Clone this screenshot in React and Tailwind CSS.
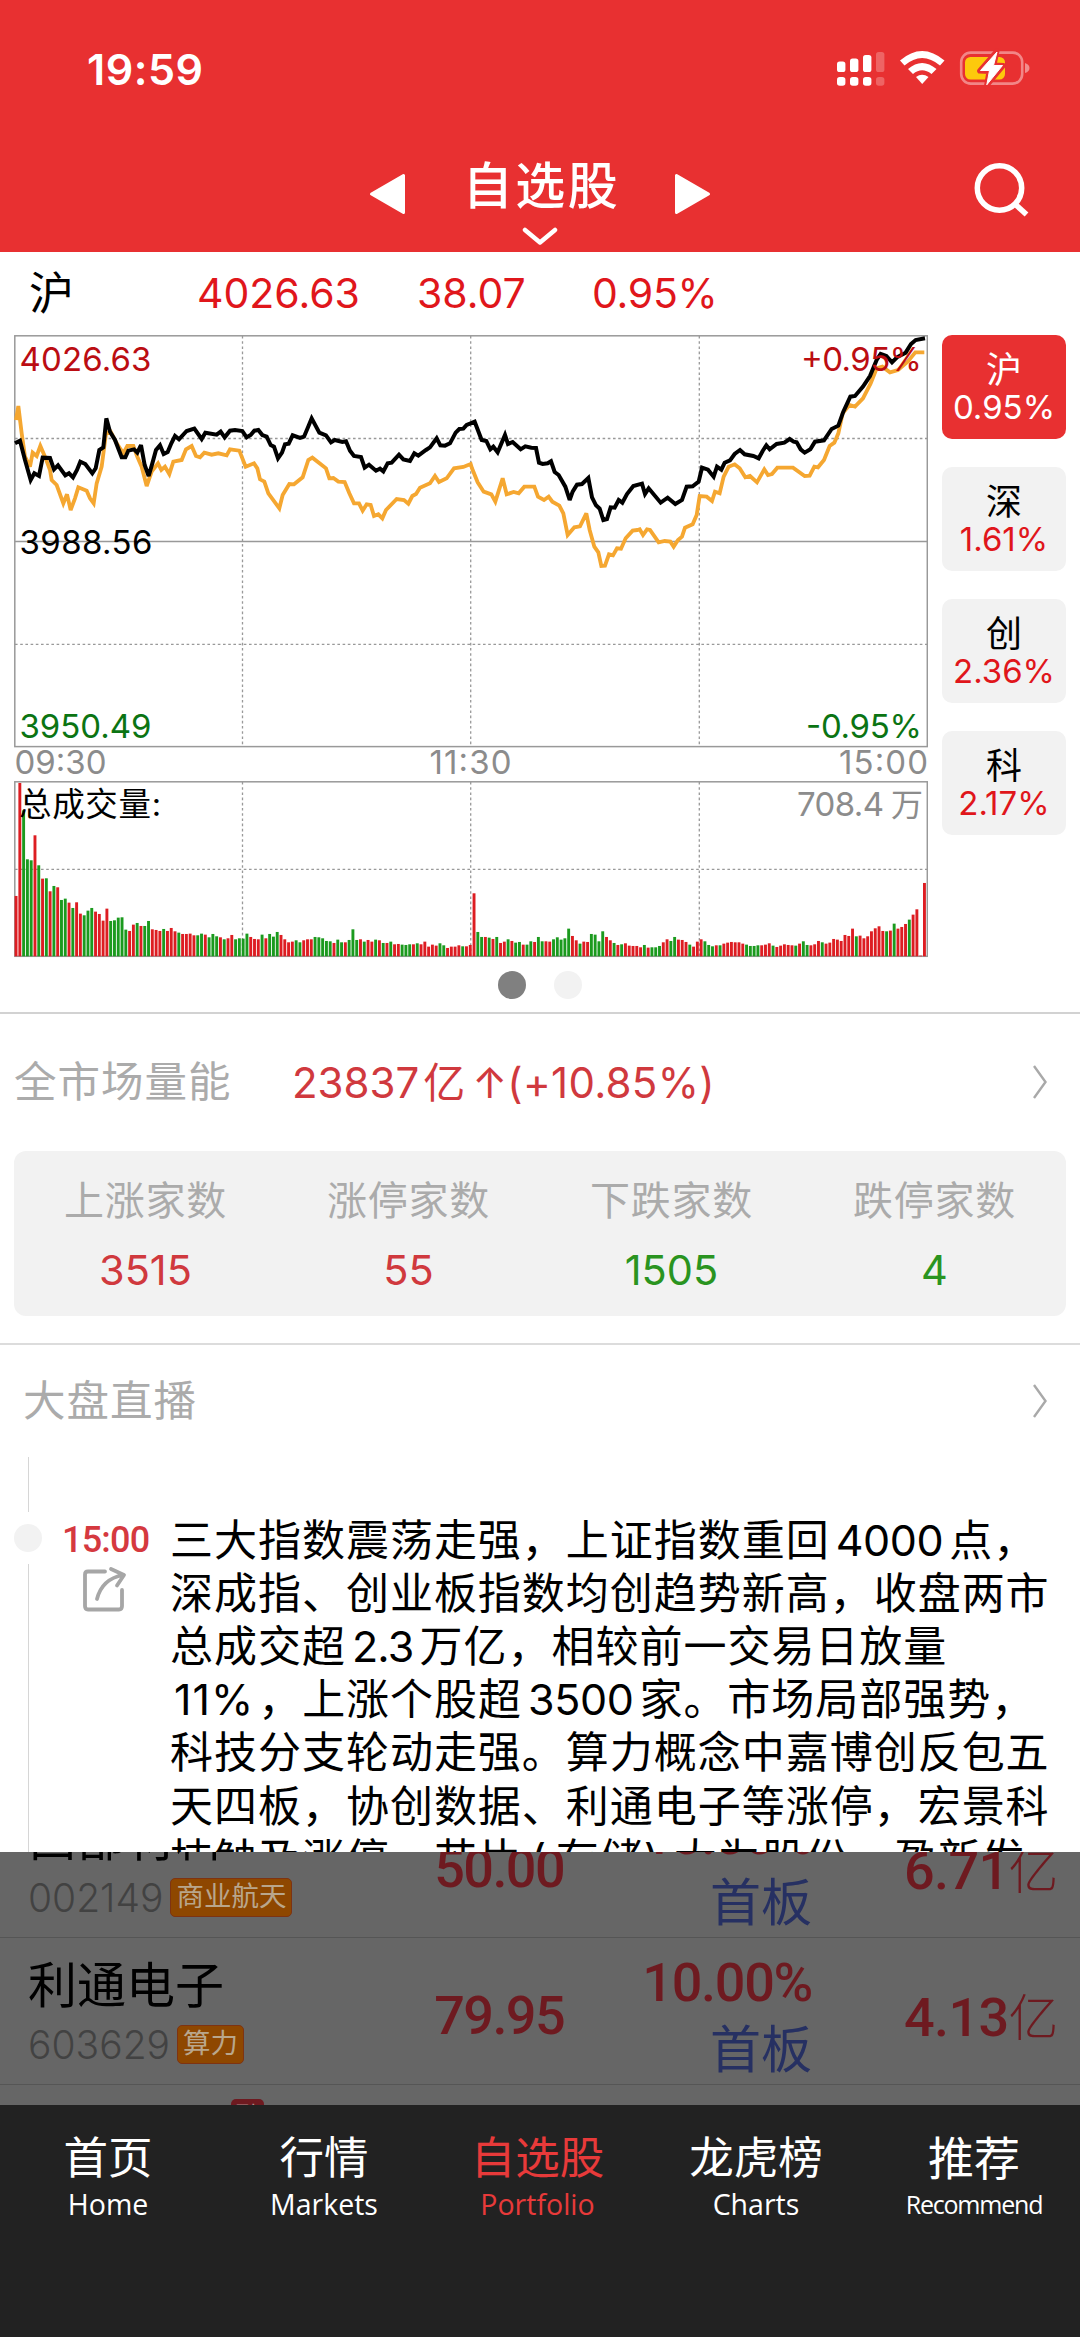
import React, { useState } from 'react';

const PRICE = '45,370 60,362 75,420 92,480 103,460 117,468 128,413 150,414 162,448 174,436 196,466 207,460 219,472 231,450 241,425 256,432 277,460 287,445 298,390 310,382 319,295 330,335 345,360 365,412 376,412 385,392 402,388 412,398 423,375 434,435 446,468 457,430 468,390 480,376 491,402 503,396 514,370 525,348 537,358 560,333 583,326 605,357 616,338 650,344 662,335 674,352 690,332 705,330 727,333 740,352 752,345 763,332 775,330 787,345 800,350 812,375 822,380 834,415 846,398 855,373 866,371 878,346 900,354 912,350 924,322 935,295 958,338 978,346 993,367 1004,360 1027,366 1038,364 1050,392 1062,408 1083,411 1094,443 1107,434 1128,452 1140,446 1150,454 1163,430 1175,428 1197,404 1210,418 1230,423 1243,400 1255,407 1278,390 1290,382 1310,355 1321,376 1335,377 1350,370 1367,338 1378,327 1390,326 1400,315 1412,310 1424,305 1445,360 1459,363 1471,388 1480,380 1493,397 1515,345 1524,372 1538,366 1562,388 1576,379 1594,383 1608,384 1617,428 1628,432 1643,430 1653,424 1664,456 1676,465 1696,500 1709,540 1718,515 1731,494 1746,492 1765,474 1776,532 1788,556 1799,566 1810,600 1821,597 1832,562 1844,563 1856,540 1867,548 1881,522 1900,498 1926,491 1935,522 1946,505 1982,548 2003,533 2026,552 2046,540 2060,500 2078,499 2096,485 2106,443 2124,449 2141,470 2151,440 2164,449 2174,428 2190,421 2204,402 2220,390 2234,403 2260,408 2276,415 2288,393 2299,376 2309,388 2330,372 2353,368 2369,357 2381,365 2390,367 2402,388 2414,398 2431,388 2445,365 2472,361 2495,327 2515,317 2530,275 2551,230 2565,228 2589,200 2610,168 2630,120 2642,102 2659,108 2676,127 2691,112 2717,98 2733,72 2747,60 2775,55';

const AVERAGE = '48,300 55,258 65,340 75,410 90,440 98,398 110,408 121,378 135,410 150,450 155,480 170,495 190,550 201,523 212,570 225,535 235,502 260,512 270,535 281,550 290,490 305,440 318,340 332,335 350,370 370,400 382,378 400,378 412,410 425,440 440,498 455,455 474,430 484,450 495,440 508,462 520,425 545,420 558,388 575,378 588,408 600,412 613,398 635,404 655,400 680,406 690,388 718,392 737,440 762,430 772,445 780,478 793,485 805,520 838,565 848,525 868,492 882,493 908,472 925,420 937,413 978,445 988,475 1000,474 1015,485 1034,486 1048,520 1062,550 1077,550 1088,572 1100,553 1112,555 1122,588 1135,583 1147,595 1158,570 1190,537 1212,540 1225,551 1237,528 1248,522 1260,503 1290,490 1305,468 1317,486 1340,475 1362,445 1390,441 1412,432 1416,445 1433,487 1451,515 1474,523 1486,545 1508,475 1520,523 1541,516 1556,520 1573,500 1603,500 1614,530 1632,540 1646,530 1657,545 1678,557 1690,580 1703,645 1723,622 1740,619 1759,580 1769,630 1783,680 1795,697 1804,738 1815,737 1827,703 1839,706 1851,685 1863,686 1877,655 1898,632 1912,630 1919,628 1929,645 1941,628 1950,630 1976,667 1994,663 2011,665 2021,680 2034,660 2046,650 2055,623 2078,613 2090,585 2099,528 2120,530 2136,543 2145,515 2159,520 2171,470 2186,440 2204,433 2219,445 2236,472 2250,468 2271,487 2293,448 2304,465 2316,462 2332,443 2379,443 2414,468 2429,467 2443,440 2454,442 2472,420 2489,378 2503,368 2515,340 2528,280 2548,255 2565,260 2589,235 2612,190 2630,145 2647,140 2670,157 2694,150 2723,125 2746,97 2773,97';

// negative = falling minute
const VOLUME = [
    181, 520, -438, -291, -288, 363, -273, 233, -234, 195, -211, 207, -169, -173, 161, -145, 162, 128, -123, -137,
    -145, 134, 127, 107, 143, -106, -108, -116, -117, -80, 76, 95, -100, 91, -91, -106, 81, 79, 76, -82,
    76, 85, 75, -71, 67, 67, 68, 63, -63, -68, 65, -57, -67, -60, 57, -51, 54, 64, -51, -54,
    -53, -68, 58, 52, 51, -65, 54, -67, -59, -73, 64, 51, 42, 44, -48, -42, 48, 51, 51, -58,
    -57, -54, -46, -45, 40, -50, -42, 42, -49, -81, -49, 51, -44, 49, 44, -50, 48, -40, 40, -44,
    36, 37, -35, -34, -36, 36, -39, 36, 44, 29, 35, 32, -39, -33, 25, 29, 29, 33, -30, 30,
    34, 189, -73, -58, 58, -56, 52, -58, 40, 44, -51, 46, -41, -43, 35, -35, -45, 43, -58, -45,
    45, 44, -51, -57, -50, -54, -83, 61, 48, -38, 44, 43, -67, -65, -45, -75, 58, 48, -40, 34,
    -36, 39, 32, 31, 31, 27, -34, 26, -27, -27, -31, 42, 51, -46, -58, 50, 49, 43, -35, 29,
    44, 51, -45, -34, -30, 33, -33, 38, 41, 43, 42, 42, 38, -35, -31, -31, -33, 33, 35, 39,
    -32, 28, 32, 36, 34, 33, -32, 38, -45, -34, 33, 36, 46, -42, 38, 41, 52, 50, 46, 64,
    61, 83, -60, 62, 54, 60, 75, 84, 90, 76, -75, 77, -98, 83, 88, 97, -110, 125, 141, 2, 220,
];

const INDEXES = [
    { name: '沪', change: '0.95%' },
    { name: '深', change: '1.61%' },
    { name: '创', change: '2.36%' },
    { name: '科', change: '2.17%' },
];

const STATS = [
    { label: '上涨家数', value: '3515', color: 'text-[#d0393e]' },
    { label: '涨停家数', value: '55', color: 'text-[#d0393e]' },
    { label: '下跌家数', value: '1505', color: 'text-[#2a9420]' },
    { label: '跌停家数', value: '4', color: 'text-[#2a9420]' },
];

const STOCKS = [
    { name: '西部材料', code: '002149', tag: '商业航天', price: '50.00', percent: '10.00%', amount: '6.71' },
    { name: '利通电子', code: '603629', tag: '算力', price: '79.95', percent: '10.00%', amount: '4.13' },
];

const TABS = [
    { cn: '首页', en: 'Home' },
    { cn: '行情', en: 'Markets' },
    { cn: '自选股', en: 'Portfolio' },
    { cn: '龙虎榜', en: 'Charts' },
    { cn: '推荐', en: 'Recommend', small: true },
];

const StatusIcons = () => (
    <svg width="200" height="44" viewBox="832 46 200 44" fill="#fff">
        <rect x="837" y="61.5" width="8.4" height="10.5" rx="2.6" />
        <rect x="850" y="58.5" width="8.4" height="13.5" rx="2.6" />
        <rect x="863" y="55" width="8.4" height="17" rx="2.6" />
        <rect x="876" y="52" width="8.4" height="20" rx="2.6" opacity="0.25" />
        <rect x="837" y="77" width="8.4" height="8.8" rx="2.8" />
        <rect x="850" y="77" width="8.4" height="8.8" rx="2.8" />
        <rect x="863" y="77" width="8.4" height="8.8" rx="2.8" />
        <rect x="876" y="77" width="8.4" height="8.8" rx="2.8" opacity="0.25" />
        <path d="M900 60.5 Q922 41.500 944.500 60.500 L940 65.500 Q922 50.500 904.500 65.500 Z" />
        <path d="M908 69 Q922 57 936.500 69 L931.500 74 Q922 66.500 913 74 Z" />
        <path d="M916 77 Q922 72.500 928.500 77 L922.200 84 Z" />
        <rect x="961.200" y="52.600" width="61" height="31" rx="9.500" fill="none" stroke="#fff" strokeOpacity="0.42" strokeWidth="2.600" />
        <path d="M1025 63 Q1029.500 64.500 1029.500 68 Q1029.500 71.500 1025 73 Z" opacity="0.45" />
        <rect x="965" y="57" width="40" height="22.500" rx="5.500" fill="#fdc90c" />
        <path d="M997 51 L979.500 71 L989 71.500 L986.500 86 L1003.500 65.500 L994 65 Z" stroke="#e83031" strokeWidth="5" strokeLinejoin="round" />
        <path d="M997 52 L980.500 70.500 L989.500 70.500 L986.800 84.800 L1002.500 65.500 L993.500 65.500 Z" stroke="#fff" strokeWidth="1" strokeLinejoin="round" />
    </svg>
);

const Header = () => (
    <header className="h-[252px] bg-[#e83031] text-white">
        <div className="flex h-[136px] items-center justify-between pl-[87px] pr-[48px]">
            <span className="pt-[2px] text-[43px] font-semibold leading-none tracking-[0.500px]">19:59</span>
            <StatusIcons />
        </div>
        <div className="flex items-start pl-[369px] pr-[50px]">
            <svg className="mt-[37px]" width="37" height="42" viewBox="0 0 37 42" fill="#fff" stroke="#fff" strokeWidth="3" strokeLinejoin="round">
                <path d="M34.500 2.500 V39.500 L2.500 21 Z" />
            </svg>
            <div className="flex w-[268px] flex-col items-center">
                <h1 className="mt-[20px] h-[60px] pl-[3px] text-[50px] font-medium leading-[60px] tracking-[2.500px]">自选股</h1>
                <svg className="mt-[10px]" width="36" height="20" viewBox="0 0 36 20" fill="none" stroke="#fff" strokeWidth="4.500" strokeLinecap="round" strokeLinejoin="round">
                    <path d="M3 4 L18 16.500 L33 4" />
                </svg>
            </div>
            <svg className="mt-[37px]" width="37" height="42" viewBox="0 0 37 42" fill="#fff" stroke="#fff" strokeWidth="3" strokeLinejoin="round">
                <path d="M2.500 2.500 V39.500 L34.500 21 Z" />
            </svg>
            <svg className="ml-auto mt-[25px]" width="60" height="60" viewBox="970 161 60 60" fill="none" stroke="#fff" strokeWidth="5.500">
                <circle cx="999.500" cy="188" r="22.200" />
                <path d="M1015.500 204.500 L1026.500 214.500" />
            </svg>
        </div>
    </header>
);

const TrendChart = () => (
    <svg className="shrink-0" width="928" height="630" viewBox="0 335 928 630" fontSize="33">
        <g fill="none" stroke="#999" strokeWidth="1.500">
            <rect x="14.800" y="335.800" width="912.500" height="410.800" />
            <path d="M15 541.400 H927" />
            <rect x="14.800" y="781.800" width="912.500" height="174.500" />
            <path strokeDasharray="2.600 2.600" strokeWidth="1.300" d="M242.500 336 V746 M470.700 336 V746 M699.300 336 V746 M15 438.500 H927 M15 644.300 H927 M242.500 782 V956 M470.700 782 V956 M699.300 782 V956 M15 869.300 H927" />
        </g>
        <g transform="translate(0 320) scale(0.33333)" fill="none" strokeLinejoin="miter" strokeMiterlimit="3">
            <polyline points={AVERAGE} stroke="#f5a731" strokeWidth="11.500" />
            <polyline points={PRICE} stroke="#000" strokeWidth="12" />
        </g>
        {VOLUME.map((v, i) => (
            <rect
                key={i}
                x={14.6 + i * 3.785}
                y={956.300 - Math.abs(v) / 3}
                width="2.900"
                height={Math.abs(v) / 3}
                fill={v > 0 ? '#dd1d22' : '#1b9a1e'}
            />
        ))}
        <text x="19.500" y="370.500" textLength="132" fill="#bb0d12">4026.63</text>
        <text x="19.500" y="554" textLength="133" fill="#000">3988.56</text>
        <text x="19.500" y="738" textLength="132" fill="#0b7413">3950.49</text>
        <text x="801" y="370.500" textLength="121" fill="#bb0d12">+0.95%</text>
        <text x="806" y="738" textLength="116" fill="#0b7413">-0.95%</text>
        <g fill="#8c8c8c">
            <text x="14.500" y="774" textLength="92">09:30</text>
            <text x="429.500" y="774" textLength="82">11:30</text>
            <text x="839" y="774" textLength="89">15:00</text>
            <text x="797" y="816" textLength="87">708.4</text>
            <text x="891" y="816" fontSize="32">万</text>
        </g>
        <text x="19" y="816" textLength="142" fill="#000" fontSize="32.500">总成交量:</text>
    </svg>
);

const ChevronRight = () => (
    <svg width="16" height="36" viewBox="0 0 16 36" fill="none" stroke="#a9a9a9" strokeWidth="2.400">
        <path d="M2 2 L13.500 18 L2 34" />
    </svg>
);

const LiveFeed = () => (
    <div className="flex h-[396px] overflow-hidden">
        <div className="flex w-[56px] shrink-0 flex-col items-center">
            <div className="h-[55px] w-px bg-[#d6d6d6]" />
            <div className="my-[12px] h-[28px] w-[28px] shrink-0 rounded-full bg-[#f2f2f2]" />
            <div className="w-px flex-1 bg-[#d6d6d6]" />
        </div>
        <div className="flex w-[114px] shrink-0 flex-col pl-[6px] pt-[63px]">
            <span className="font-['Roboto'] text-[36px] font-medium leading-[40px] tracking-[-0.800px] text-[#d5393f]">15:00</span>
            <svg className="ml-[18px] mt-[4px]" width="50" height="50" viewBox="80 1564 50 50" fill="none" stroke="#a6a6a6" strokeWidth="3.800" strokeLinecap="round" strokeLinejoin="round">
                <path d="M105 1571.500 H88 Q85 1571.500 85 1574.500 V1606 Q85 1609.500 88 1609.500 H119 Q122 1609.500 122 1606 V1590" />
                <path d="M97 1599 Q102 1579 123 1575 M111 1569 L124 1575 L117 1585.500" />
            </svg>
        </div>
        <div className="whitespace-nowrap pt-[57px] text-[43px] leading-[53.200px] tracking-[0.980px] text-black">
            <p>三大指数震荡走强，上证指数重回<span className="mx-[6px] tracking-[-0.400px]">4000</span>点，</p>
            <p>深成指、创业板指数均创趋势新高，收盘两市</p>
            <p>总成交超<span className="mx-[6px] tracking-[-0.800px]">2.3</span>万亿，相较前一交易日放量</p>
            <p><span className="ml-[4px] mr-[4px]">11%</span>，上涨个股超<span className="mx-[6px] tracking-[-0.400px]">3500</span>家。市场局部强势，</p>
            <p>科技分支轮动走强。算力概念中嘉博创反包五</p>
            <p>天四板，协创数据、利通电子等涨停，宏景科</p>
            <p>技触及涨停，芯片<span className="inline-block w-[34px] text-center">(</span>存储<span className="inline-block w-[30px]">)</span>大为股份、盈新发</p>
        </div>
    </div>
);

// rows dimmed behind the sheet
const StockRow = ({ stock }) => (
    <div className="flex h-[147px] shrink-0 border-b-[1.500px] border-[#555] font-['Roboto','Noto_Sans_CJK_SC',sans-serif]">
        <div className="w-[430px] pl-[28px] pt-[21px]">
            <div className="h-[56px] text-[49px] leading-[56px] text-black">{stock.name}</div>
            <div className="mt-[9px] flex h-[40px] items-center gap-[7px]">
                <span className="font-['Inter'] text-[39px] font-light leading-none text-[#424242]">{stock.code}</span>
                <span className="flex h-[39px] items-center rounded-[5px] border-[1.500px] border-[#7e3312] bg-[#8e4700] px-[5px] text-[27.500px] leading-none text-[#b9a68c]">{stock.tag}</span>
            </div>
        </div>
        <div className="w-[134px] pt-[53px] text-right text-[54px] font-medium leading-[50px] tracking-[-1.600px] text-[#6e1a20]">{stock.price}</div>
        <div className="w-[248px] pt-[20px] text-right">
            <div className="text-[54px] font-medium leading-[50px] tracking-[-1.300px] text-[#6e1a20]">{stock.percent}</div>
            <div className="pt-[3px] text-[51px] leading-[80px] text-[#263062]">首板</div>
        </div>
        <div className="flex-1 pr-[22px] pt-[55px] text-right text-[54px] font-medium leading-[50px] tracking-[-0.600px] text-[#6e1a20]">
            {stock.amount}<span className="text-[50px] font-light">亿</span>
        </div>
    </div>
);

export default function App() {
    const [index, setIndex] = useState('沪');
    const [tab, setTab] = useState('自选股');

    return (
        <div className="flex h-[2337px] w-[1080px] flex-col overflow-hidden bg-white font-['Inter','Noto_Sans_CJK_SC',sans-serif]">
            <Header />

            <div className="flex h-[83px] items-center pl-[29px] text-[41px] leading-none text-[#e0161b]">
                <span className="w-[168px] text-[45px] text-black">沪</span>
                <span className="w-[220px]">4026.63</span>
                <span className="w-[175px]">38.07</span>
                <span className="tracking-[-0.300px]">0.95%</span>
            </div>

            <section className="flex h-[630px] shrink-0">
                <TrendChart />
                <div className="flex w-[152px] flex-col gap-[28px] pl-[14px] pr-[14px]">
                    {INDEXES.map((item) => (
                        <button
                            key={item.name}
                            onClick={() => setIndex(item.name)}
                            className={`flex h-[104px] flex-col items-center rounded-[10px] pt-[15px] ${
                                item.name === index ? 'bg-[#e83031] text-white' : 'bg-[#f2f2f2]'
                            }`}
                        >
                            <span className={`text-[36px] leading-[40px] ${item.name === index ? '' : 'text-black'}`}>{item.name}</span>
                            <span className={`text-[33px] leading-[34px] ${item.name === index ? '' : 'text-[#e0161b]'}`}>{item.change}</span>
                        </button>
                    ))}
                </div>
            </section>

            <div className="flex h-[49px] shrink-0 justify-center gap-[28px] border-b-2 border-[#d2d2d2] pt-[6px]">
                <span className="size-[28px] rounded-full bg-[#808080]" />
                <span className="size-[28px] rounded-full bg-[#f2f2f2]" />
            </div>

            <section className="h-[331px] shrink-0 border-b-2 border-[#dcdcdc] px-[14px]">
                <div className="flex h-[137px] items-center pr-[18px]">
                    <span className="w-[278px] text-[42.500px] tracking-[1px] text-[#ababab]">全市场量能</span>
                    <span className="text-[42px] text-[#d0393e]">
                        23837<span className="ml-[4px]">亿</span><span className="ml-[7px]">↑</span><span className="tracking-[0.300px]">(+10.85%)</span>
                    </span>
                    <span className="ml-auto"><ChevronRight /></span>
                </div>
                <div className="grid h-[165px] grid-cols-4 rounded-[12px] bg-[#f2f2f2] pt-[25px] text-center">
                    {STATS.map((s) => (
                        <div key={s.label}>
                            <div className="h-[50px] text-[40px] leading-[50px] tracking-[0.700px] text-[#ababab]">{s.label}</div>
                            <div className={`mt-[19px] text-[41.500px] leading-[50px] ${s.color}`}>{s.value}</div>
                        </div>
                    ))}
                </div>
            </section>

            <div className="flex h-[112px] shrink-0 items-center justify-between pl-[23px] pr-[32px]">
                <span className="text-[42.500px] tracking-[1px] text-[#ababab]">大盘直播</span>
                <ChevronRight />
            </div>
            <LiveFeed />

            <section className="h-[253px] shrink-0 overflow-hidden bg-[#666]">
                <div className="-mt-[61px] flex flex-col">
                    {STOCKS.map((s) => <StockRow key={s.code} stock={s} />)}
                    <div className="ml-[231px] mt-[14px] h-[34px] w-[33px] overflow-hidden rounded-[5px] bg-[#6e1a20] pt-[3px] text-center text-[24px] leading-[28px] text-[#a88]">融</div>
                </div>
            </section>

            <nav className="grid h-[232px] shrink-0 grid-cols-5 bg-[#222] pt-[26px] text-center text-white">
                {TABS.map((t) => (
                    <button key={t.cn} onClick={() => setTab(t.cn)} className={`flex flex-col items-center ${t.cn === tab ? 'pr-[5px] text-[#e83a3a]' : ''} ${t.small ? 'pl-[4px]' : ''}`}>
                        <span className={`leading-[54px] ${t.small ? 'text-[46px]' : 'text-[44.500px]'}`}>{t.cn}</span>
                        <span className={`font-['Open_Sans'] leading-[38px] ${t.small ? 'text-[25px] tracking-[-1.200px]' : 'text-[28.500px]'}`}>{t.en}</span>
                    </button>
                ))}
            </nav>
        </div>
    );
}
